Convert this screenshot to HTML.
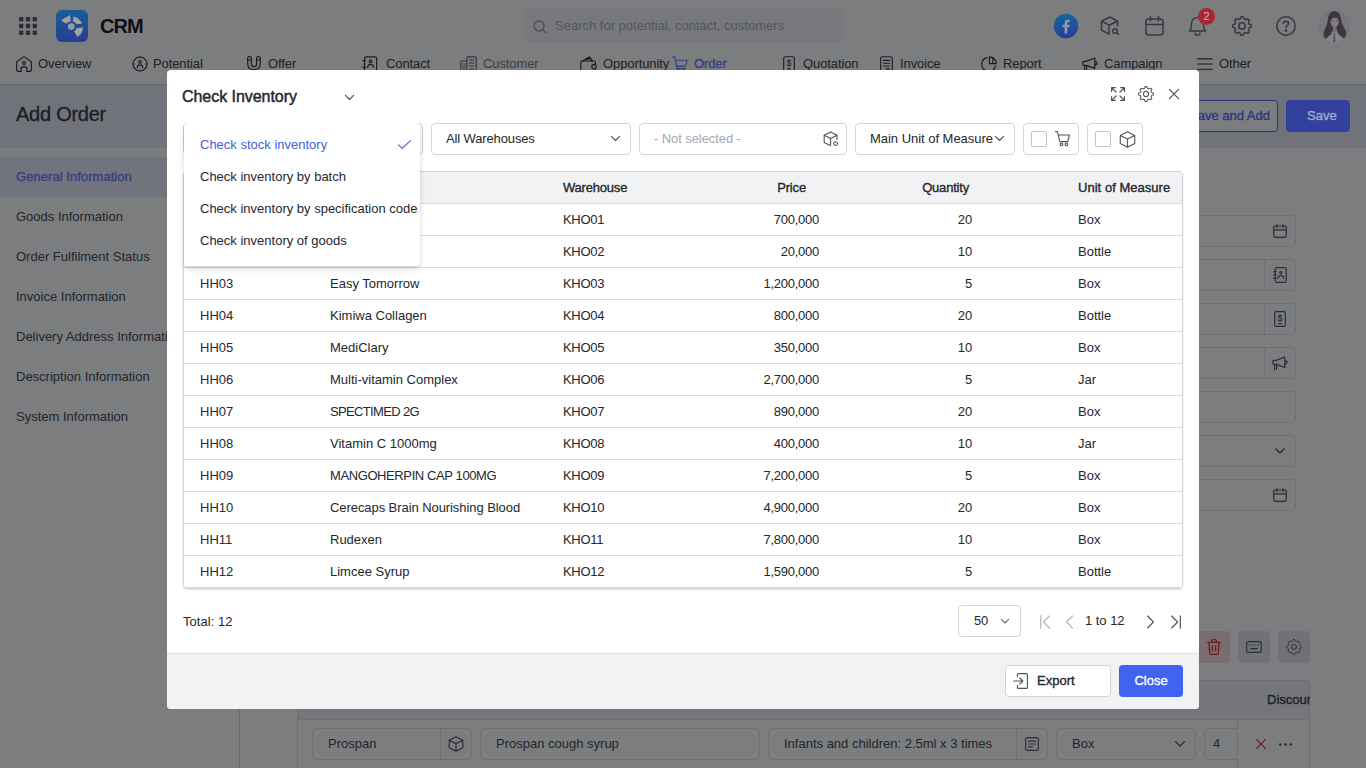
<!DOCTYPE html>
<html>
<head>
<meta charset="utf-8">
<title>CRM - Check Inventory</title>
<style>
*{box-sizing:border-box;margin:0;padding:0}
html,body{width:1366px;height:768px;overflow:hidden}
body{font-family:"Liberation Sans",sans-serif;font-size:13px;color:#1f2229;background:#fff;position:relative}
.abs{position:absolute}
svg{display:block;overflow:visible}
.ic{position:absolute;fill:none;stroke:#33363e;stroke-width:1.15;stroke-linecap:round;stroke-linejoin:round}
/* ---------- base page ---------- */
#page{position:absolute;left:0;top:0;width:1366px;height:768px;background:#fff}
#hdr{position:absolute;left:0;top:0;width:1366px;height:84px;background:#fff}
#sub{position:absolute;left:0;top:84px;width:1366px;height:64px;background:#e6eaf3;border-top:1px solid #d4d7de}
#side{position:absolute;left:0;top:148px;width:240px;height:620px;background:#fff}
#main .t{color:#484c54}
#main{position:absolute;left:240px;top:148px;width:1126px;height:620px;background:#fff}
.fld{position:absolute;height:32px;border:1px solid #e0e2e7;border-radius:4px;background:#fff}
.sep{position:absolute;top:0;width:1px;height:30px;background:#e0e2e7}
.t{position:absolute;white-space:nowrap;line-height:16px}
.nav{font-size:13px;color:#3e424a;letter-spacing:-.1px}
.sitem{font-size:13px;color:#484c54;left:16px}
/* ---------- overlay ---------- */
#ov{position:absolute;left:0;top:0;width:1366px;height:768px;background:rgba(0,1,6,.513)}
#top{position:absolute;left:0;top:0;width:0;height:0}
/* ---------- modal ---------- */
#modal{position:absolute;left:167px;top:70px;width:1032px;height:639px;background:#fff;border-radius:4px;overflow:hidden}
#mfoot{position:absolute;left:0;top:583px;width:1032px;height:56px;background:#f1f2f4;border-top:1px solid #dfe1e5}

.md{font-weight:400;-webkit-text-stroke:.35px #24272d}
#modal .t{color:#24272d}
.box{position:absolute;top:53px;height:32px;border:1px solid #d3d4d7;border-radius:4px;background:#fff}
#tbl{position:absolute;left:16px;top:101px;width:1000px;height:418px;border:1px solid #d3d4d7;border-radius:4px;box-shadow:0 1px 2px rgba(0,0,0,.12);overflow:hidden;background:#fff}
#th{position:absolute;left:0;top:0;width:998px;height:32px;background:#f1f2f4;border-bottom:1px solid #d8dade}
.row{position:absolute;left:0;width:998px;height:32px;border-bottom:1px solid #d8dade}
.row .t,#th .t{top:8px}
.c1{left:16px}.c2{left:146px}.c3{left:379px;letter-spacing:-.3px}.c4{right:363px;letter-spacing:-.25px}.c5{right:210px;letter-spacing:-.15px}.c6{left:894px}
#dd{position:absolute;left:17px;top:53px;width:236px;height:143px;background:#fff;border-radius:4px;box-shadow:0 3px 6px rgba(0,0,0,.14),0 1px 2px rgba(0,0,0,.08);clip-path:inset(0 -12px -12px -12px)}
#dd .t{left:16px}
.cb{position:absolute;top:7px;width:16px;height:16px;border:1px solid #c2c5cb;border-radius:2px;background:#fff}
</style>
</head>
<body>
<svg width="0" height="0" style="position:absolute"><defs><symbol id="gear" viewBox="0 0 20 20"><path d="M10.0 0.7 L10.5 0.7 L10.9 0.8 L11.3 1.1 L11.6 1.9 L11.8 2.7 L12.1 3.0 L12.4 3.2 L12.8 3.3 L13.1 3.5 L13.4 3.6 L13.9 3.5 L14.6 3.1 L15.3 2.8 L15.8 2.9 L16.2 3.1 L16.6 3.4 L16.9 3.8 L17.1 4.2 L17.2 4.7 L16.9 5.4 L16.5 6.1 L16.4 6.6 L16.5 6.9 L16.7 7.2 L16.8 7.6 L17.0 7.9 L17.3 8.2 L18.1 8.4 L18.9 8.7 L19.2 9.1 L19.3 9.5 L19.3 10.0 L19.3 10.5 L19.2 10.9 L18.9 11.3 L18.1 11.6 L17.3 11.8 L17.0 12.1 L16.8 12.4 L16.7 12.8 L16.5 13.1 L16.4 13.4 L16.5 13.9 L16.9 14.6 L17.2 15.3 L17.1 15.8 L16.9 16.2 L16.6 16.6 L16.2 16.9 L15.8 17.1 L15.3 17.2 L14.6 16.9 L13.9 16.5 L13.4 16.4 L13.1 16.5 L12.8 16.7 L12.4 16.8 L12.1 17.0 L11.8 17.3 L11.6 18.1 L11.3 18.9 L10.9 19.2 L10.5 19.3 L10.0 19.3 L9.5 19.3 L9.1 19.2 L8.7 18.9 L8.4 18.1 L8.2 17.3 L7.9 17.0 L7.6 16.8 L7.2 16.7 L6.9 16.5 L6.6 16.4 L6.1 16.5 L5.4 16.9 L4.7 17.2 L4.2 17.1 L3.8 16.9 L3.4 16.6 L3.1 16.2 L2.9 15.8 L2.8 15.3 L3.1 14.6 L3.5 13.9 L3.6 13.4 L3.5 13.1 L3.3 12.8 L3.2 12.4 L3.0 12.1 L2.7 11.8 L1.9 11.6 L1.1 11.3 L0.8 10.9 L0.7 10.5 L0.7 10.0 L0.7 9.5 L0.8 9.1 L1.1 8.7 L1.9 8.4 L2.7 8.2 L3.0 7.9 L3.2 7.6 L3.3 7.2 L3.5 6.9 L3.6 6.6 L3.5 6.1 L3.1 5.4 L2.8 4.7 L2.9 4.2 L3.1 3.8 L3.4 3.4 L3.8 3.1 L4.2 2.9 L4.7 2.8 L5.4 3.1 L6.1 3.5 L6.6 3.6 L6.9 3.5 L7.2 3.3 L7.6 3.2 L7.9 3.0 L8.2 2.7 L8.4 1.9 L8.7 1.1 L9.1 0.8 L9.5 0.7 Z"/><circle cx="10" cy="10" r="3.2"/></symbol></defs></svg>
<div id="page">
  <div id="hdr">
    <!-- app grid -->
    <svg class="abs" style="left:19px;top:17px" width="18" height="18" viewBox="0 0 18 18" fill="#5d6068">
      <rect x="0" y="0" width="4.4" height="4.4" rx="1"/><rect x="6.8" y="0" width="4.4" height="4.4" rx="1"/><rect x="13.6" y="0" width="4.4" height="4.4" rx="1"/>
      <rect x="0" y="6.8" width="4.4" height="4.4" rx="1"/><rect x="6.8" y="6.8" width="4.4" height="4.4" rx="1"/><rect x="13.6" y="6.8" width="4.4" height="4.4" rx="1"/>
      <rect x="0" y="13.6" width="4.4" height="4.4" rx="1"/><rect x="6.8" y="13.6" width="4.4" height="4.4" rx="1"/><rect x="13.6" y="13.6" width="4.4" height="4.4" rx="1"/>
    </svg>
    <!-- logo -->
    
    <div class="t" style="left:100px;top:14px;font-size:20px;font-weight:700;line-height:24px;letter-spacing:-1px;color:#1f2229">CRM</div>
    <!-- search -->
    <div class="abs" style="left:524px;top:9px;width:320px;height:33px;border-radius:4px;background:#f3f4f6"></div>
    <svg class="ic" style="left:532px;top:19px;stroke:#9a9ea6;stroke-width:1.3" width="16" height="16" viewBox="0 0 16 16"><circle cx="7" cy="7" r="5"/><path d="M10.8 10.8 L14 14"/></svg>
    <div class="t" style="left:555px;top:18px;font-size:13px;color:#aeb2ba">Search for potential, contact, customers</div>
    <!-- right icons -->
    
    <svg class="ic" style="left:1100px;top:16px;stroke:#6e7178;stroke-width:1.5" width="20" height="20" viewBox="0 0 20 20"><path d="M9 18 L1.5 14.2 V5.2 L10 1 L17.5 5.2 V10"/><path d="M1.5 5.2 L9 9.2 L17.5 5.2 M9 9.2 V18"/><circle cx="15" cy="15" r="2.3"/><path d="M16.8 16.8 L18.5 18.5"/></svg>
    <svg class="ic" style="left:1145px;top:16px;stroke:#6e7178;stroke-width:1.5" width="19" height="20" viewBox="0 0 19 20"><rect x="1" y="3" width="17" height="16" rx="2.5"/><path d="M1 8.5 H18 M5.5 0.8 V5 M13.5 0.8 V5"/></svg>
    <svg class="ic" style="left:1188px;top:16px;stroke:#6e7178;stroke-width:1.5" width="19" height="20" viewBox="0 0 19 20"><path d="M1.5 15 C3.5 13 3.5 11 3.5 8 C3.5 4 6 1.5 9.5 1.5 C13 1.5 15.5 4 15.5 8 C15.5 11 15.5 13 17.5 15 Z"/><path d="M7 17.2 C7.5 18.6 8.4 19.2 9.5 19.2 C10.6 19.2 11.5 18.6 12 17.2"/></svg>
    
    <svg class="ic" style="left:1232px;top:16px;stroke:#6e7178;stroke-width:1.5" width="20" height="20" viewBox="0 0 20 20"><use href="#gear"/></svg>
    <svg class="ic" style="left:1276px;top:16px;stroke:#6e7178;stroke-width:1.5" width="20" height="20" viewBox="0 0 20 20"><circle cx="10" cy="10" r="9.2"/><path d="M7.4 7.6 C7.4 6 8.6 5.2 10 5.2 C11.5 5.2 12.6 6.2 12.6 7.5 C12.6 9.4 10 9.6 10 11.8"/><circle cx="10" cy="14.6" r=".6" fill="#6e7178"/></svg>
    <!-- avatar moved to top layer -->
    <!-- nav row -->
    <svg class="ic" style="left:16px;top:56px" width="16" height="16" viewBox="0 0 16 16"><path d="M0.7 5.8 L8 0.6 L15.3 5.8 V13.9 C15.3 14.7 14.8 15.3 14 15.3 H10.9 V12.9 C10.9 11.3 9.7 10.6 8 10.6 C6.3 10.6 5.1 11.3 5.1 12.9 V15.3 H2 C1.2 15.3 .7 14.7 .7 13.9 Z"/><circle cx="8" cy="6.9" r="1.4"/></svg>
    <div class="t nav" style="left:38px;top:56px">Overview</div>
    <svg class="ic" style="left:131.6px;top:56.3px" width="16" height="16" viewBox="0 0 16 16"><circle cx="8" cy="8" r="7"/><circle cx="8" cy="5.9" r="1.3"/><path d="M5.2 11.6 C5.4 9.6 6.6 8.8 8 8.8 C9.4 8.8 10.6 9.6 10.8 11.6"/><path d="M8 1 V2 M8 14 V15 M1 8 H2 M14 8 H15"/></svg>
    <div class="t nav" style="left:153px;top:56px">Potential</div>
    <svg class="ic" style="left:247px;top:56px" width="14" height="14" viewBox="0 0 14 14"><path d="M.7 2 C.7 1 1.5 .6 2.6 .6 C3.8 .6 4.4 1.2 4.4 2.2 V8 C4.4 9.8 5.4 10.6 7 10.6 C8.6 10.6 9.6 9.8 9.6 8 V2.2 C9.6 1.2 10.2 .6 11.4 .6 C12.5 .6 13.3 1 13.3 2 V8 C13.3 11.6 10.6 13.6 7 13.6 C3.4 13.6 .7 11.6 .7 8 Z"/><path d="M.7 4 H4.4 M9.6 4 H13.3"/></svg>
    <div class="t nav" style="left:268px;top:56px">Offer</div>
    <svg class="ic" style="left:362px;top:56px" width="16" height="16" viewBox="0 0 16 16"><rect x="2.6" y="0.8" width="12" height="14.4" rx="1.6"/><path d="M0.8 4.6 H3.4 M0.8 11.4 H3.4"/><circle cx="8.6" cy="5.4" r="1.3"/><path d="M5.6 11.4 C5.8 9.2 7 8.4 8.6 8.4 C10.2 8.4 11.4 9.2 11.6 11.4"/></svg>
    <div class="t nav" style="left:386px;top:56px">Contact</div>
    <svg class="ic" style="left:460px;top:56px;stroke:#686c75" width="17" height="16" viewBox="0 0 17 16"><path d="M6.8 15.2 V2 C6.8 1.2 7.4 .8 8 .8 H15 C15.6 .8 16.2 1.2 16.2 2 V15.2"/><path d="M0.8 15.2 V6.2 C0.8 5.4 1.4 5 2 5 H6.8"/><path d="M9.2 4 H13.8 M9.2 7 H13.8 M9.2 10 H13.8 M10 15.2 V13 H13 V15.2"/><path d="M2.8 8 H3.4 M4.6 8 H5.2 M2.8 10.4 H3.4 M4.6 10.4 H5.2 M2.8 12.8 H3.4 M4.6 12.8 H5.2"/></svg>
    <div class="t nav" style="left:483px;top:56px;color:#7a7e88">Customer</div>
    <svg class="ic" style="left:580px;top:56px" width="17" height="16" viewBox="0 0 17 16"><path d="M0.8 15.2 V6.4 C0.8 5.6 1.4 5 2.2 5 H14 C14.8 5 15.4 5.6 15.4 6.4 V8.4"/><path d="M2.6 5 L9.4 0.8 L12.4 5 M6.6 3.6 L9.8 2.2 L11.4 5"/><path d="M15.4 13 V15.2"/><circle cx="14" cy="10.6" r="2.2"/></svg>
    <div class="t nav" style="left:603px;top:56px">Opportunity</div>
    <svg class="ic" style="left:672px;top:56px;stroke:#6e7cff" width="16" height="16" viewBox="0 0 16 16"><path d="M0.6 0.8 H2.6 L4.8 10.4 H13.2 L15.2 4.2 H3.6"/><path d="M4.8 10.4 V12.6 H13.4"/><circle cx="6.2" cy="14.2" r="1"/><circle cx="12" cy="14.2" r="1"/></svg>
    <div class="t nav" style="left:694px;top:56px;color:#6e7cff;-webkit-text-stroke:.3px #6e7cff">Order</div>
    <svg class="ic" style="left:783px;top:56px" width="12" height="16" viewBox="0 0 12 16"><rect x="0.7" y="0.7" width="10.6" height="14.6" rx="1.6"/><path d="M4.6 12.8 H7.4"/></svg>
    <div class="t" style="left:786.4px;top:58px;font-size:9px;line-height:10px;color:#33363e">$</div>
    <div class="t nav" style="left:803px;top:56px">Quotation</div>
    <svg class="ic" style="left:880px;top:56px" width="13" height="16" viewBox="0 0 13 16"><rect x="0.7" y="0.7" width="11.6" height="14.6" rx="1.6"/><path d="M3.4 4.4 H9.6 M3.4 7.2 H9.6 M3.4 10 H9.6 M6 12.8 H9.6"/></svg>
    <div class="t nav" style="left:900px;top:56px">Invoice</div>
    <svg class="ic" style="left:981px;top:56px" width="16" height="16" viewBox="0 0 16 16"><path d="M6.2 1.6 C2.8 2.2 0.8 5 0.8 8.4 C0.8 12.2 3.8 15.2 7.6 15.2 C11 15.2 13.8 13.2 14.4 9.8"/><path d="M8.4 0.8 C12.4 0.8 15.2 3.8 15.2 7.6 H8.4 Z"/><path d="M11.8 1.8 V7.6"/></svg>
    <div class="t nav" style="left:1003px;top:56px">Report</div>
    <svg class="ic" style="left:1082px;top:56px" width="16" height="16" viewBox="0 0 16 16"><path d="M4.2 5.4 L12.8 2 V12.4 L4.2 9.4 H2 C1.2 9.4 0.8 8.8 0.8 8.2 V6.6 C0.8 6 1.2 5.4 2 5.4 Z"/><path d="M12.8 5.6 C14 5.6 15 6.4 15 7.2 C15 8 14 8.8 12.8 8.8"/><path d="M2.6 9.4 V14.6 M4.6 9.6 V14.6"/></svg>
    <div class="t nav" style="left:1104px;top:56px">Campaign</div>
    <svg class="ic" style="left:1197px;top:56px" width="16" height="16" viewBox="0 0 16 16"><path d="M0.7 2.8 H15.3 M0.7 8 H15.3 M0.7 13.2 H15.3"/></svg>
    <div class="t nav" style="left:1219px;top:56px">Other</div>
  </div>
  <div id="sub">
    <div class="t" style="left:16px;top:15px;font-size:20px;line-height:28px;color:#3a3e48;-webkit-text-stroke:.3px #3a3e48;letter-spacing:-.25px">Add Order</div>
    <div class="abs" style="left:1100px;top:15px;width:178px;height:32px;border:1px solid #5468ee;border-radius:4px;background:#fff"></div>
    <div class="t md" style="left:1189px;top:23px;color:#5a70ff;-webkit-text-stroke-color:#5a70ff">Save and Add</div>
  </div>
  <div id="side">
    <div class="abs" style="left:0;top:9px;width:240px;height:40px;background:#e8ebfa"></div>
    <div class="t sitem" style="top:21px;color:#6e7cff;-webkit-text-stroke:.3px #6e7cff;letter-spacing:.05px">General Information</div>
    <div class="t sitem" style="top:61px">Goods Information</div>
    <div class="t sitem" style="top:101px">Order Fulfilment Status</div>
    <div class="t sitem" style="top:141px">Invoice Information</div>
    <div class="t sitem" style="top:181px">Delivery Address Information</div>
    <div class="t sitem" style="top:221px">Description Information</div>
    <div class="t sitem" style="top:261px">System Information</div>
    <div class="abs" style="left:239px;top:0;width:1px;height:620px;background:#dcdfe4"></div>
  </div>
  <div id="main">
    <div class="fld" style="left:460px;top:67px;width:596px"></div>
    <div class="fld" style="left:460px;top:111px;width:596px"><div class="sep" style="left:563px"></div></div>
    <div class="fld" style="left:460px;top:155px;width:596px"><div class="sep" style="left:563px"></div></div>
    <div class="fld" style="left:460px;top:199px;width:596px"><div class="sep" style="left:563px"></div></div>
    <div class="fld" style="left:460px;top:243px;width:596px"></div>
    <div class="fld" style="left:460px;top:287px;width:596px"></div>
    <div class="fld" style="left:460px;top:331px;width:596px"></div>
    <svg class="ic" style="left:1033px;top:76px;stroke:#585c64;stroke-width:1.2" width="14" height="14" viewBox="0 0 14 14"><rect x=".7" y="2" width="12.6" height="11.3" rx="1.8"/><path d="M.7 5.8 H13.3 M4 .6 V3.4 M10 .6 V3.4"/></svg>
    <svg class="ic" style="left:1033px;top:340px;stroke:#585c64;stroke-width:1.2" width="14" height="14" viewBox="0 0 14 14"><rect x=".7" y="2" width="12.6" height="11.3" rx="1.8"/><path d="M.7 5.8 H13.3 M4 .6 V3.4 M10 .6 V3.4"/></svg>
    <svg class="ic" style="left:1033px;top:119px;stroke:#585c64;stroke-width:1.2" width="14" height="16" viewBox="0 0 14 16"><rect x="2.2" y=".7" width="11" height="14.6" rx="1.6"/><path d="M.7 4.6 H3 M.7 8 H3 M.7 11.4 H3"/><circle cx="7.8" cy="5.6" r="1.1"/><path d="M5 11.4 C5.2 9.2 6.4 8.4 7.8 8.4 C9.2 8.4 10.4 9.2 10.6 11.4"/></svg>
    <svg class="ic" style="left:1034px;top:163px;stroke:#585c64;stroke-width:1.2" width="12" height="16" viewBox="0 0 12 16"><rect x=".7" y=".7" width="10.6" height="14.6" rx="1.6"/><path d="M4.4 12.6 H7.6"/></svg>
    <div class="t" style="left:1037.5px;top:165px;font-size:9px;line-height:10px;color:#33363e">$</div>
    <svg class="ic" style="left:1032px;top:207px;stroke:#585c64;stroke-width:1.2" width="16" height="16" viewBox="0 0 16 16"><path d="M4.2 5.4 L12.8 2 V12.4 L4.2 9.4 H2 C1.2 9.4 .8 8.8 .8 8.2 V6.6 C.8 6 1.2 5.4 2 5.4 Z"/><path d="M12.8 5.6 C14 5.6 15 6.4 15 7.2 C15 8 14 8.8 12.8 8.8"/><path d="M2.6 9.4 V14.6 M4.6 9.6 V14.6"/></svg>
    <svg class="ic" style="left:1035px;top:300px;stroke:#585c64;stroke-width:1.3" width="10" height="6" viewBox="0 0 10 6"><path d="M.7 .7 L5 5 L9.3 .7"/></svg>
    <div class="abs" style="left:958px;top:483px;width:32px;height:32px;border-radius:4px;background:#fbdfe4"></div>
    <svg class="ic" style="left:967px;top:491px;stroke:#e03a3a;stroke-width:1.3" width="14" height="16" viewBox="0 0 14 16"><path d="M.7 3.4 H13.3 M4.6 3.4 V1.6 C4.6 1 5 .7 5.6 .7 H8.4 C9 .7 9.4 1 9.4 1.6 V3.4 M2 3.4 L2.6 14 C2.6 14.8 3.2 15.3 4 15.3 H10 C10.8 15.3 11.4 14.8 11.4 14 L12 3.4 M5.4 6.6 V12 M8.6 6.6 V12"/></svg>
    <div class="abs" style="left:998px;top:483px;width:32px;height:32px;border-radius:4px;background:#e6e8ee"></div>
    <svg class="ic" style="left:1006px;top:493px;stroke:#585c64;stroke-width:1.2" width="16" height="12" viewBox="0 0 16 12"><rect x=".7" y=".7" width="14.6" height="10.6" rx="1.6"/><path d="M3.4 4 H4 M6 4 H6.6 M8.8 4 H9.4 M11.6 4 H12.4 M4.6 7.6 H11.4"/></svg>
    <div class="abs" style="left:1038px;top:483px;width:32px;height:32px;border-radius:4px;background:#e6e8ee"></div>
    <svg class="ic" style="left:1046px;top:491px;stroke:#585c64;stroke-width:1.2" width="16" height="16" viewBox="0 0 20 20"><use href="#gear"/></svg>
    <div class="abs" style="left:57px;top:532px;width:1013px;height:100px;border:1px solid #dfe1e6;border-radius:4px 4px 0 0;background:#fff;overflow:hidden"><div class="abs" style="left:0;top:0;width:1013px;height:39px;background:#eff0f3;border-bottom:1px solid #dfe1e6"></div></div>
    <div class="t" style="left:1027px;top:544px;font-size:13px;-webkit-text-stroke:.35px #3a3e46;color:#3a3e46 !important;width:43px;overflow:hidden">Discount</div>
    <div class="fld" style="left:72px;top:580px;width:160px"><div class="sep" style="left:127px"></div></div>
    <div class="fld" style="left:240px;top:580px;width:280px"></div>
    <div class="fld" style="left:528px;top:580px;width:280px"><div class="sep" style="left:247px"></div></div>
    <div class="fld" style="left:816px;top:580px;width:140px"></div>
    <div class="fld" style="left:964px;top:580px;width:96px"></div>
    <div class="t" style="left:88px;top:588px">Prospan</div>
    <div class="t" style="left:256px;top:588px">Prospan cough syrup</div>
    <div class="t" style="left:544px;top:588px">Infants and children: 2.5ml x 3 times</div>
    <div class="t" style="left:832px;top:588px">Box</div>
    <div class="t" style="left:973px;top:588px">4</div>
    <svg class="ic" style="left:208px;top:588px;stroke:#585c64;stroke-width:1.2" width="16" height="16" viewBox="0 0 16 16"><path d="M8 .8 L14.8 4.2 V11.8 L8 15.2 L1.2 11.8 V4.2 Z M1.2 4.2 L8 7.6 L14.8 4.2 M8 7.6 V15.2"/></svg>
    <svg class="ic" style="left:785px;top:589px;stroke:#585c64;stroke-width:1.2" width="14" height="14" viewBox="0 0 14 14"><rect x=".7" y=".7" width="12.6" height="12.6" rx="1.6"/><path d="M3.6 4.2 H10.4 M3.6 7 H10.4 M3.6 9.8 H7.6"/></svg>
    <svg class="ic" style="left:935px;top:593px;stroke:#585c64;stroke-width:1.3" width="10" height="6" viewBox="0 0 10 6"><path d="M.7 .7 L5 5 L9.3 .7"/></svg>
    <div class="abs" style="left:997px;top:572px;width:72px;height:48px;background:#fff;border-left:1px solid #dfe1e6"></div>
    <svg class="ic" style="left:1016px;top:591px;stroke:#e03a3a;stroke-width:1.3" width="10" height="10" viewBox="0 0 10 10"><path d="M.6 .6 L9.4 9.4 M9.4 .6 L.6 9.4"/></svg>
    <svg class="abs" style="left:1039px;top:595px" width="13" height="3" viewBox="0 0 13 3" fill="#585c64"><circle cx="1.3" cy="1.5" r="1.3"/><circle cx="6.5" cy="1.5" r="1.3"/><circle cx="11.7" cy="1.5" r="1.3"/></svg>
  </div>
</div>
<div id="ov"></div>
<div id="top">
  <svg class="abs" style="left:56px;top:10px" width="32" height="32" viewBox="0 0 32 32">
      <defs><linearGradient id="lg" x1="0" y1="0" x2="0" y2="1"><stop offset="0" stop-color="#195f96"/><stop offset="1" stop-color="#283c96"/></linearGradient></defs>
      <rect width="32" height="32" rx="6" fill="url(#lg)"/>
      <g fill="#a5a1a3">
        <path d="M5.1 10.3 L14 5.1 L14.8 11.2 Q12 11.6 10.1 13.8 Z"/>
        <path d="M17.6 6.4 Q23.5 8 26.2 13.4 L20.6 14.3 Q19.6 12.2 16.9 11.2 Z"/>
        <path d="M27 17.4 Q27 23 21.5 27 L18.1 21.5 Q20.3 20.3 20.6 18.2 Z"/>
        <circle cx="15.3" cy="16.6" r="3.3" fill="#9698a8"/>
      </g>
    </svg>
  <svg class="abs" style="left:1054px;top:14px" width="24" height="24" viewBox="0 0 24 24">
      <defs><linearGradient id="fg" x1="0" y1="0" x2="0" y2="1"><stop offset="0" stop-color="#16669a"/><stop offset="1" stop-color="#283c98"/></linearGradient></defs>
      <circle cx="12" cy="12" r="12.2" fill="url(#fg)"/>
      <path d="M13.2 19.5v-6.2h2.1l.35-2.5H13.2V9.3c0-.75.25-1.2 1.25-1.2h1.3V5.9c-.25-.03-1-.1-1.9-.1-1.95 0-3.2 1.15-3.2 3.3v1.7H8.5v2.5h2.15v6.2z" fill="#8f98b5"/>
    </svg>
  <div class="abs" style="left:1198px;top:8px;width:17px;height:17px;border-radius:9px;background:#ab2630;color:#d8b4b6;font-size:11px;line-height:17px;text-align:center">2</div>
  <div class="abs" style="left:1286px;top:100px;width:64px;height:32px;border-radius:4px;background:#32429c"></div>
  <div class="t md" style="left:1307px;top:108px;color:#a3abd0;-webkit-text-stroke-color:#a3abd0">Save</div>
  <svg class="abs" style="left:1318px;top:10px" width="32" height="32" viewBox="0 0 32 32">
    <defs><clipPath id="av"><circle cx="16" cy="16" r="16"/></clipPath></defs>
    <g clip-path="url(#av)"><g style="filter:blur(.6px)">
      <rect x="-2" y="-2" width="36" height="36" fill="#76777b"/>
      <path d="M16.4 1.2 C12.4 1.2 10.4 4.6 10 9 C9.6 14 7.4 17.6 5.8 22.6 C5.2 25.4 5.8 27.4 7.2 28.4 L12.4 26.4 L16.6 21 L20.8 26.4 L26.2 28 C28.2 26.4 28.6 24 28 21.4 C26 17 23.8 14.4 23.2 10 C22.8 5 20.8 1.2 16.4 1.2 Z" fill="#38383e"/>
      <path d="M8.6 32 C8.8 27.6 10.4 25.4 13 24.4 L15.2 19.6 H18.4 L20.6 24.4 C23.2 25.4 24.8 27.6 25 32 Z" fill="#868688"/>
      <path d="M14.8 16.6 H18.6 V20.2 L16.7 22.8 L14.8 20.2 Z" fill="#776c6c"/>
      <ellipse cx="16.7" cy="11.6" rx="4.2" ry="5.5" fill="#887b7b"/>
      <path d="M12.2 11 C12 6.6 14.6 4.8 17 5 C19.6 5.2 21.4 7.4 21.2 11.4 C20.4 8.8 19 7.6 16.8 7.8 C14.6 8 13 9 12.2 11 Z" fill="#38383e"/>
      <path d="M13.6 11 H15.4 M17.8 11 H19.6" stroke="#4a4446" stroke-width=".8"/>
      <path d="M15.8 23.4 L16.7 22.4 L17.4 32 H15.4 Z" fill="#4a494e"/>
    </g></g>
  </svg>
</div>
<div id="modal">
  <div class="t md" style="left:15px;top:16px;font-size:16px;line-height:22px;letter-spacing:-.05px;-webkit-text-stroke-width:.45px">Check Inventory</div>
  <svg class="ic" style="left:178px;top:25px;stroke:#50535b;stroke-width:1.15" width="9" height="5" viewBox="0 0 9 5"><path d="M.4 .4 L4.5 4.5 L8.6 .4"/></svg>
  <svg class="ic" style="left:944px;top:17px;stroke:#50535b;stroke-width:1.2" width="14" height="14" viewBox="0 0 14 14"><path d="M.6 4.4 V.6 H4.4 M.6 .6 L5 5 M9.6 .6 H13.4 V4.4 M13.4 .6 L9 5 M.6 9.6 V13.4 H4.4 M.6 13.4 L5 9 M13.4 9.6 V13.4 H9.6 M13.4 13.4 L9 9"/></svg>
  <svg class="ic" style="left:971px;top:16px;stroke:#5a5d65;stroke-width:1.45" width="16" height="16" viewBox="0 0 20 20"><use href="#gear"/></svg>
  <svg class="ic" style="left:1002px;top:19px;stroke:#50535b;stroke-width:1.2" width="10" height="10" viewBox="0 0 10 10"><path d="M.4 .4 L9.6 9.6 M9.6 .4 L.4 9.6"/></svg>
  <!-- toolbar -->
  <div class="box" style="left:16px;width:240px"></div>
  <div class="box" style="left:264px;width:200px"></div>
  <div class="t" style="left:279px;top:61px;letter-spacing:-.13px">All Warehouses</div>
  <svg class="ic" style="left:444px;top:66px;stroke:#50535b;stroke-width:1.15" width="9" height="5" viewBox="0 0 9 5"><path d="M.4 .4 L4.5 4.5 L8.6 .4"/></svg>
  <div class="box" style="left:472px;width:208px"></div>
  <div class="t" style="left:487px;top:61px;color:#a2a6ae !important;letter-spacing:-.08px"><span style="color:#a4a8b0">- Not selected -</span></div>
  <svg class="ic" style="left:656px;top:61px;stroke:#50535b;stroke-width:1.1" width="16" height="16" viewBox="0 0 16 16"><path d="M7.2 14.6 L1.2 11.6 V4.2 L7.6 .9 L14 4.2 V8.4"/><path d="M1.2 4.2 L7.6 7.4 L14 4.2 M7.6 7.4 V14"/><circle cx="12.6" cy="12.6" r="1.9"/></svg>
  <div class="box" style="left:688px;width:160px"></div>
  <div class="t" style="left:703px;top:61px;letter-spacing:-.03px">Main Unit of Measure</div>
  <svg class="ic" style="left:828px;top:66px;stroke:#50535b;stroke-width:1.15" width="9" height="5" viewBox="0 0 9 5"><path d="M.4 .4 L4.5 4.5 L8.6 .4"/></svg>
  <div class="box" style="left:856px;width:56px"><div class="cb" style="left:7px"></div></div>
  <svg class="ic" style="left:888px;top:61px;stroke:#50535b;stroke-width:1.1" width="15" height="15" viewBox="0 0 15 15"><path d="M.5 .6 H2.4 L4.8 10.6 H12.8 L14.4 4 H3.3"/><circle cx="6.4" cy="13.3" r="1.35"/><circle cx="11.4" cy="13.3" r="1.35"/></svg>
  <div class="box" style="left:920px;width:56px"><div class="cb" style="left:7px"></div></div>
  <svg class="ic" style="left:951.5px;top:60.5px;stroke:#50535b;stroke-width:1.05" width="17" height="17" viewBox="0 0 16 16"><path d="M8 .8 L14.8 4.2 V11.8 L8 15.2 L1.2 11.8 V4.2 Z M1.2 4.2 L8 7.6 L14.8 4.2 M8 7.6 V15.2"/></svg>
  <!-- table -->
  <div id="tbl">
    <div id="th">
      <div class="t md c1">Goods Code</div><div class="t md c2">Goods Name</div>
      <div class="t md" style="left:379px;letter-spacing:-.2px">Warehouse</div>
      <div class="t md" style="right:376px;letter-spacing:-.15px">Price</div>
      <div class="t md" style="right:213px;letter-spacing:-.2px">Quantity</div>
      <div class="t md" style="left:894px;letter-spacing:.03px">Unit of Measure</div>
    </div>
    <div class="row" style="top:32px"><div class="t c1">HH01</div><div class="t c2"></div><div class="t c3">KHO01</div><div class="t c4">700,000</div><div class="t c5">20</div><div class="t c6">Box</div></div>
    <div class="row" style="top:64px"><div class="t c1">HH02</div><div class="t c2"></div><div class="t c3">KHO02</div><div class="t c4">20,000</div><div class="t c5">10</div><div class="t c6">Bottle</div></div>
    <div class="row" style="top:96px"><div class="t c1">HH03</div><div class="t c2">Easy Tomorrow</div><div class="t c3">KHO03</div><div class="t c4">1,200,000</div><div class="t c5">5</div><div class="t c6">Box</div></div>
    <div class="row" style="top:128px"><div class="t c1">HH04</div><div class="t c2">Kimiwa Collagen</div><div class="t c3">KHO04</div><div class="t c4">800,000</div><div class="t c5">20</div><div class="t c6">Bottle</div></div>
    <div class="row" style="top:160px"><div class="t c1">HH05</div><div class="t c2">MediClary</div><div class="t c3">KHO05</div><div class="t c4">350,000</div><div class="t c5">10</div><div class="t c6">Box</div></div>
    <div class="row" style="top:192px"><div class="t c1">HH06</div><div class="t c2">Multi-vitamin Complex</div><div class="t c3">KHO06</div><div class="t c4">2,700,000</div><div class="t c5">5</div><div class="t c6">Jar</div></div>
    <div class="row" style="top:224px"><div class="t c1">HH07</div><div class="t c2" style="letter-spacing:-.65px">SPECTIMED 2G</div><div class="t c3">KHO07</div><div class="t c4">890,000</div><div class="t c5">20</div><div class="t c6">Box</div></div>
    <div class="row" style="top:256px"><div class="t c1">HH08</div><div class="t c2">Vitamin C 1000mg</div><div class="t c3">KHO08</div><div class="t c4">400,000</div><div class="t c5">10</div><div class="t c6">Jar</div></div>
    <div class="row" style="top:288px"><div class="t c1">HH09</div><div class="t c2" style="letter-spacing:-.4px">MANGOHERPIN CAP 100MG</div><div class="t c3">KHO09</div><div class="t c4">7,200,000</div><div class="t c5">5</div><div class="t c6">Box</div></div>
    <div class="row" style="top:320px"><div class="t c1">HH10</div><div class="t c2" style="letter-spacing:-.07px">Cerecaps Brain Nourishing Blood</div><div class="t c3">KHO10</div><div class="t c4">4,900,000</div><div class="t c5">20</div><div class="t c6">Box</div></div>
    <div class="row" style="top:352px"><div class="t c1">HH11</div><div class="t c2">Rudexen</div><div class="t c3">KHO11</div><div class="t c4">7,800,000</div><div class="t c5">10</div><div class="t c6">Box</div></div>
    <div class="row" style="top:384px"><div class="t c1">HH12</div><div class="t c2">Limcee Syrup</div><div class="t c3">KHO12</div><div class="t c4">1,590,000</div><div class="t c5">5</div><div class="t c6">Bottle</div></div>
  </div>
  <!-- dropdown -->
  <div id="dd">
    <div class="t" style="top:14px;color:#4159d6 !important"><span style="color:#4560dc">Check stock inventory</span></div>
    <svg class="ic" style="left:213.6px;top:17px;stroke:#4b66d8;stroke-width:1.2" width="13" height="9" viewBox="0 0 13 9"><path d="M.6 4.8 L4.2 8.4 L12.4 .6"/></svg>
    <div class="t" style="top:46px">Check inventory by batch</div>
    <div class="t" style="top:78px">Check inventory by specification code</div>
    <div class="t" style="top:110px">Check inventory of goods</div>
  </div>
  <!-- paging -->
  <div class="t" style="left:16px;top:544px;letter-spacing:.05px">Total: 12</div>
  <div class="abs" style="left:791px;top:535px;width:63px;height:32px;border:1px solid #d3d4d7;border-radius:4px;background:#fff"></div>
  <div class="t" style="left:807px;top:543px;letter-spacing:-.2px">50</div>
  <svg class="ic" style="left:834px;top:549px;stroke:#6a6d75;stroke-width:1.15" width="8" height="5" viewBox="0 0 8 5"><path d="M.4 .4 L4 4 L7.6 .4"/></svg>
  <svg class="ic" style="left:872.5px;top:545px;stroke:#b3b6bd;stroke-width:1.2" width="10" height="14" viewBox="0 0 10 14"><path d="M.7 .7 V13.3 M9.4 1 L3.4 7 L9.4 13"/></svg>
  <svg class="ic" style="left:899px;top:545px;stroke:#b3b6bd;stroke-width:1.2" width="7" height="14" viewBox="0 0 7 14"><path d="M6.4 1 L.6 7 L6.4 13"/></svg>
  <div class="t" style="left:918px;top:543px;letter-spacing:-.03px">1 to 12</div>
  <svg class="ic" style="left:980px;top:545px;stroke:#50535b;stroke-width:1.15" width="7" height="14" viewBox="0 0 7 14"><path d="M.6 1 L6.4 7 L.6 13"/></svg>
  <svg class="ic" style="left:1004px;top:545px;stroke:#50535b;stroke-width:1.15" width="10" height="14" viewBox="0 0 10 14"><path d="M9.3 .7 V13.3 M.6 1 L6.6 7 L.6 13"/></svg>
  <!-- footer -->
  <div id="mfoot">
    <div class="abs" style="left:838px;top:11px;width:106px;height:32px;border:1px solid #d3d4d7;border-radius:4px;background:#fff"></div>
    <svg class="ic" style="left:846px;top:19px;stroke:#50535b;stroke-width:1.1" width="15" height="16" viewBox="0 0 15 16"><path d="M4.4 3.6 V1.6 C4.4 1 4.8 .6 5.4 .6 H13.4 C14 .6 14.4 1 14.4 1.6 V14.4 C14.4 15 14 15.4 13.4 15.4 H5.4 C4.8 15.4 4.4 15 4.4 14.4 V12.4"/><path d="M.6 8 H9.6 M6.8 5 L9.8 8 L6.8 11"/></svg>
    <div class="t md" style="left:870px;top:19px">Export</div>
    <div class="abs" style="left:952px;top:11px;width:64px;height:32px;border-radius:4px;background:#4262f0"></div>
    <div class="t md" style="left:952px;width:64px;text-align:center;top:19px;color:#fff !important;-webkit-text-stroke-color:#fff"><span style="color:#fff">Close</span></div>
  </div>
</div>
</body>
</html>
